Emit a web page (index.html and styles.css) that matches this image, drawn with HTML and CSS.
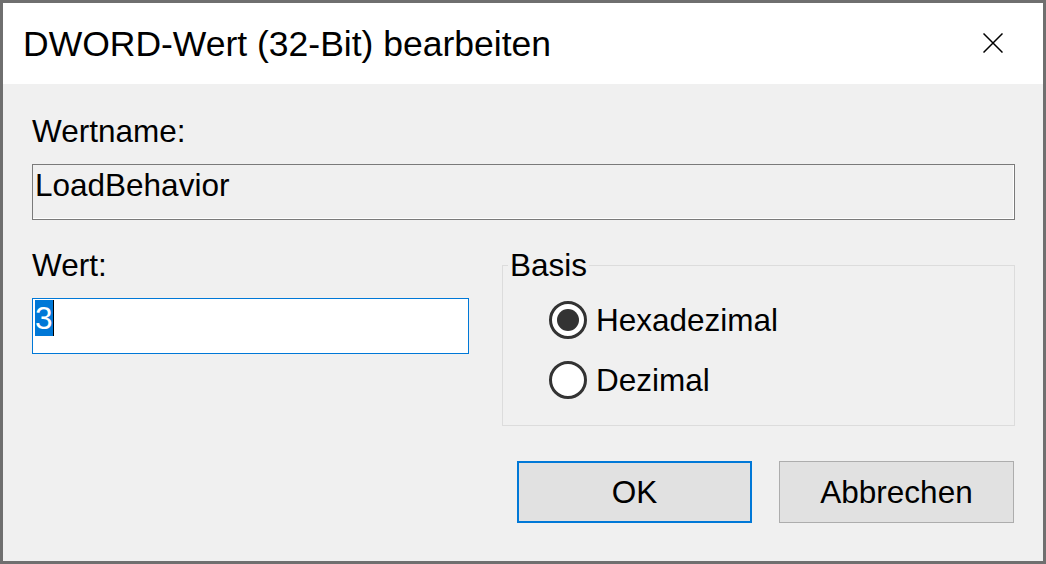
FILE: index.html
```html
<!DOCTYPE html>
<html lang="de">
<head>
<meta charset="utf-8">
<title>DWORD-Wert (32-Bit) bearbeiten</title>
<link rel="stylesheet" href="styles.css">
</head>
<body>
<div class="dialog">
  <div class="titlebar">
    <span class="title">DWORD-Wert (32-Bit) bearbeiten</span>
    <span class="close" aria-label="Schließen">
      <svg width="20" height="20" viewBox="0 0 20 20"><path d="M0.5 0.5 L19.5 19.5 M19.5 0.5 L0.5 19.5" stroke="#000" stroke-width="1.5" fill="none"/></svg>
    </span>
  </div>
  <div class="content">
    <div class="label">Wertname:</div>
    <div class="namefield">LoadBehavior</div>
    <div class="row">
      <div class="valuecol">
        <div class="label">Wert:</div>
        <div class="valuefield"><span class="sel">3</span><span class="caret"></span></div>
      </div>
      <fieldset class="basis">
        <legend>Basis</legend>
        <div class="options">
          <div class="radio"><span class="circle checked"></span><span>Hexadezimal</span></div>
          <div class="radio"><span class="circle"></span><span>Dezimal</span></div>
        </div>
      </fieldset>
    </div>
    <div class="buttons">
      <div class="btn default">OK</div>
      <div class="btn">Abbrechen</div>
    </div>
  </div>
</div>
</body>
</html>
```
FILE: styles.css
```css
html, body {
  margin: 0;
  padding: 0;
  background: #6f6f6f;
}
.dialog {
  width: 1046px;
  height: 564px;
  box-sizing: border-box;
  border: 3px solid #6f6f6f;
  background: #f0f0f0;
  display: flex;
  flex-direction: column;
  font-family: "Liberation Sans", Arial, sans-serif;
  color: #000;
  overflow: hidden;
}
.titlebar {
  height: 81px;
  background: #fff;
  display: flex;
  align-items: center;
  justify-content: space-between;
  padding: 2px 40px 0 20px;
  box-sizing: border-box;
  flex: none;
}
.title {
  font-size: 35.5px;
}
.close {
  width: 20px;
  height: 20px;
  display: flex;
  margin-top: -4px;
}
.content {
  flex: 1;
  padding: 29px 28px 0 29px;
  font-size: 31.5px;
  line-height: 36px;
}
.label {
  height: 36px;
}
.namefield {
  margin-top: 15px;
  height: 56px;
  box-sizing: border-box;
  border: 1px solid #7a7a7a;
  box-shadow: inset 0 -1px 0 #ffffff, inset -1px 0 0 #ffffff;
  padding: 2px 2px 0 2px;
}
.row {
  margin-top: 27px;
  display: flex;
  justify-content: space-between;
}
.valuecol {
  width: 437px;
}
.valuefield {
  margin-top: 15px;
  height: 56px;
  box-sizing: border-box;
  border: 1px solid #0078d7;
  background: #fff;
  padding: 1px 2px 0 2px;
  display: flex;
  align-items: flex-start;
}
.sel {
  background: #0078d7;
  color: #fff;
  line-height: 36px;
}
.caret {
  width: 1px;
  height: 36px;
  background: #000;
}
.basis {
  margin: 0;
  width: 513px;
  box-sizing: border-box;
  border: 1px solid #dcdcdc;
  padding: 0;
  min-width: 0;
}
.basis legend {
  margin-left: 5px;
  padding: 0 2px;
  line-height: 36px;
}
.options {
  padding: 18px 0 26px 46px;
}
.radio {
  display: flex;
  align-items: center;
  gap: 9px;
  height: 38px;
}
.radio + .radio {
  margin-top: 22px;
}
.circle {
  width: 38px;
  height: 38px;
  box-sizing: border-box;
  border: 3px solid #333;
  border-radius: 50%;
  background: #fff;
  display: flex;
  align-items: center;
  justify-content: center;
  flex: none;
}
.circle.checked::after {
  content: "";
  width: 22px;
  height: 22px;
  border-radius: 50%;
  background: #333;
}
.buttons {
  margin-top: 35px;
  margin-right: 1px;
  display: flex;
  justify-content: flex-end;
  gap: 27px;
}
.btn {
  width: 235px;
  height: 62px;
  box-sizing: border-box;
  border: 1px solid #adadad;
  background: #e1e1e1;
  display: flex;
  align-items: center;
  justify-content: center;
}
.btn.default {
  border: 2px solid #0078d7;
}
```
